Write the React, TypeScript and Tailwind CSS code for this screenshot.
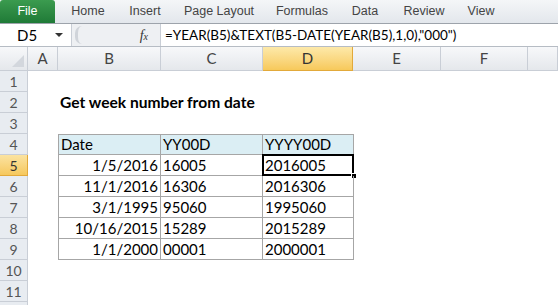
const tabs = [
  { label: "Home", w: "w-[58px]" },
  { label: "Insert", w: "w-[56px]" },
  { label: "Page Layout", w: "w-[92px]" },
  { label: "Formulas", w: "w-[74px]" },
  { label: "Data", w: "w-[52px]" },
  { label: "Review", w: "w-[66px]" },
  { label: "View", w: "w-[48px]" },
];

const cols = [
  { name: "A", w: "w-[30px]" },
  { name: "B", w: "w-[103px]" },
  { name: "C", w: "w-[102px]" },
  { name: "D", w: "w-[90px]" },
  { name: "E", w: "w-[88px]" },
  { name: "F", w: "w-[87px]" },
  { name: "", w: "flex-1" },
];

const data = [
  ["1/5/2016", "16005", "2016005"],
  ["11/1/2016", "16306", "2016306"],
  ["3/1/1995", "95060", "1995060"],
  ["10/16/2015", "15289", "2015289"],
  ["1/1/2000", "00001", "2000001"],
];

function RowHead({ n, active }: { n: number; active?: boolean }) {
  return (
    <div
      className={
        "w-[28px] shrink-0 h-full flex items-center justify-center border-r border-b text-[14px] " +
        (active
          ? "bg-gradient-to-b from-[#fbe3a0] to-[#f6c85c] border-[#e2a93a] text-[#333]"
          : "bg-[#e8ecf1] border-[#c9ced6] text-[#555]")
      }
    >
      {n}
    </div>
  );
}

export default function App() {
  return (
    <div className="w-[558px] h-[305px] overflow-hidden bg-white font-['Lato','Liberation_Sans',sans-serif] text-black">
      {/* ribbon tabs */}
      <div className="h-[24px] flex items-stretch bg-gradient-to-b from-[#f4f6f8] to-[#e3e7ec] border-b border-[#9da3ab] font-['Liberation_Sans',sans-serif] text-[12.5px] text-[#444]">
        <div className="w-[55px] flex items-center justify-center rounded-t-[3px] bg-gradient-to-b from-[#3b9b4f] to-[#1f7a37] text-white">
          File
        </div>
        <div className="w-[4px]" />
        {tabs.map((t) => (
          <div key={t.label} className={t.w + " flex items-center justify-center"}>
            {t.label}
          </div>
        ))}
      </div>

      {/* formula bar */}
      <div className="h-[23px] flex items-stretch border-b border-[#b6bcc4] bg-[#eef0f3]">
        <div className="w-[72px] bg-white flex items-center justify-between pl-[17px] pr-[8px] border-r border-[#c9ced6] text-[15px]">
          <span>D5</span>
          <div className="w-0 h-0 border-l-[4px] border-r-[4px] border-t-[4px] border-l-transparent border-r-transparent border-t-[#333]" />
        </div>
        <div className="w-[88px] relative flex items-center">
          <div className="ml-[3px] w-[14px] h-[18px] rounded-full border-l-[3px] border-[#d0d4da]" />
          <span className="ml-auto mr-[12px] font-['Liberation_Serif',serif] italic text-[14px] text-[#333]">
            f<span className="text-[10px]">x</span>
          </span>
        </div>
        <div className="flex-1 bg-white border-l border-[#c9ced6] flex items-center pl-[4px] text-[13.5px] whitespace-nowrap">
          =YEAR(B5)&amp;TEXT(B5-DATE(YEAR(B5),1,0),"000")
        </div>
      </div>

      {/* column headers */}
      <div className="h-[24px] flex items-stretch bg-gradient-to-b from-[#f7f8fa] to-[#e4e7eb] text-[15px] text-[#444]">
        <div className="w-[28px] shrink-0 border-r border-b border-[#c9ced6] relative">
          <div className="absolute right-[3px] bottom-[3px] w-0 h-0 border-l-[12px] border-l-transparent border-b-[12px] border-b-[#d3d7dd]" />
        </div>
        {cols.map((c) => (
          <div
            key={c.name || "g"}
            className={
              c.w +
              " shrink-0 flex items-center justify-center border-r border-b " +
              (c.name === "D"
                ? "bg-gradient-to-b from-[#fde9a9] to-[#f7c95a] border-[#e2a93a] text-[#333]"
                : "border-[#c9ced6]")
            }
          >
            {c.name}
          </div>
        ))}
      </div>

      {/* rows */}
      {Array.from({ length: 12 }, (_, i) => {
        const n = i + 1;
        const dataRow = n >= 5 && n <= 9 ? data[n - 5] : null;
        const tableRow = n >= 4 && n <= 9;
        const cell = "shrink-0 h-full flex items-center px-[2px] text-[15px] whitespace-nowrap";
        const tb = " border-r border-b border-[#a6a6a6]" + (n === 4 ? " border-t" : "");
        return (
          <div key={n} className="h-[21px] flex items-stretch">
            <RowHead n={n} active={n === 5} />
            <div className="w-[30px] shrink-0" />
            {n === 2 && (
              <div className="flex items-center pl-[2px] font-bold text-[15.6px] whitespace-nowrap">
                Get week number from date
              </div>
            )}
            {n === 4 && (
              <>
                <div className={cell + tb + " w-[103px] border-l bg-[#dbeef4]"}>Date</div>
                <div className={cell + tb + " w-[102px] bg-[#dbeef4]"}>YY00D</div>
                <div className={cell + tb + " w-[91px] bg-[#dbeef4]"}>YYYY00D</div>
              </>
            )}
            {dataRow && (
              <>
                <div className={cell + tb + " w-[103px] border-l justify-end"}>{dataRow[0]}</div>
                <div className={cell + tb + " w-[102px]"}>{dataRow[1]}</div>
                <div className={cell + tb + " w-[91px] relative"}>
                  {dataRow[2]}
                  {n === 5 && (
                    <>
                      <div className="absolute left-[-1px] top-[-1px] right-[-1px] bottom-[-1px] border-2 border-black" />
                      <div className="absolute right-[-4px] bottom-[-4px] w-[6px] h-[6px] bg-black border border-white" />
                    </>
                  )}
                </div>
              </>
            )}
            {!tableRow && n !== 2 && <div className="flex-1" />}
          </div>
        );
      })}
    </div>
  );
}
